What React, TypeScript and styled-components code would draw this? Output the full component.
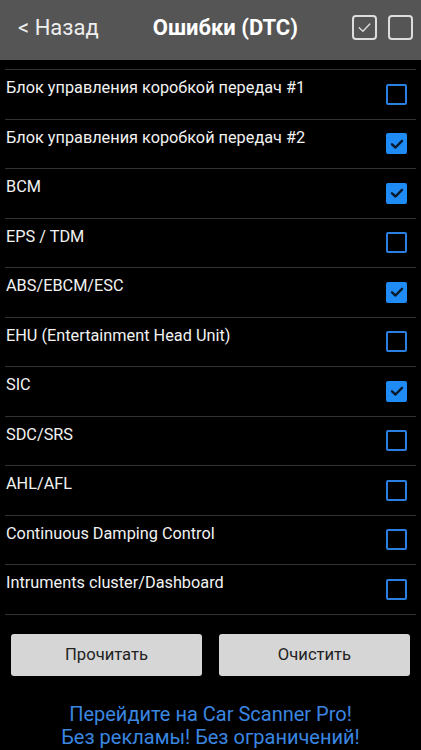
import styled, { createGlobalStyle } from "styled-components";

const GlobalStyle = createGlobalStyle`
  html, body {
    margin: 0;
    padding: 0;
    background: #000;
  }
  body {
    font-family: Roboto, "Noto Sans", sans-serif;
    -webkit-font-smoothing: antialiased;
  }
`;

const Screen = styled.div`
  width: 421px;
  height: 750px;
  background: #000;
  display: flex;
  flex-direction: column;
  overflow: hidden;
`;

const Header = styled.div`
  height: 60px;
  background: #555555;
  display: flex;
  align-items: center;
  padding: 0 8px 5px 18px;
  box-sizing: border-box;
`;

const Back = styled.div`
  color: #eeeeee;
  font-size: 22px;
  white-space: nowrap;
`;

const Title = styled.div`
  flex: 1;
  text-align: center;
  color: #ffffff;
  font-size: 22px;
  font-weight: 700;
`;

const HeaderIcons = styled.div`
  display: flex;
  gap: 11px;
`;

const HeaderBox = styled.div`
  width: 25px;
  height: 25px;
  box-sizing: border-box;
  border: 2px solid #dddddd;
  border-radius: 4px;
  display: flex;
  align-items: center;
  justify-content: center;
`;

const List = styled.div`
  margin: 9px 5px 0;
  border-top: 1px solid #333333;
`;

const Row = styled.div`
  height: 49.5px;
  box-sizing: border-box;
  border-bottom: 1px solid #333333;
  display: flex;
  align-items: center;
  justify-content: space-between;
  padding: 0 9px 0 1px;
`;

const Label = styled.div`
  align-self: flex-start;
  padding-top: 8px;
  color: #f2f2f2;
  font-size: 16.3px;
  line-height: 20px;
`;

const Check = styled.div<{ $on: boolean }>`
  width: 21px;
  height: 21px;
  box-sizing: border-box;
  border-radius: 2px;
  border: 2px solid ${(p) => (p.$on ? "#1f8cf6" : "#2b7fe0")};
  background: ${(p) => (p.$on ? "#1f8cf6" : "transparent")};
  display: flex;
  align-items: center;
  justify-content: center;
`;

const Buttons = styled.div`
  display: flex;
  gap: 17px;
  padding: 19px 11px 0;
`;

const Button = styled.div`
  flex: 1;
  height: 42px;
  background: #d6d6d6;
  border-radius: 3px;
  display: flex;
  align-items: center;
  justify-content: center;
  color: #222222;
  font-size: 16.6px;
`;

const Promo = styled.div`
  margin-top: 27px;
  text-align: center;
  color: #3a86e0;
  font-size: 20px;
  line-height: 23px;
`;

const items: { name: string; on: boolean }[] = [
  { name: "Блок управления коробкой передач #1", on: false },
  { name: "Блок управления коробкой передач #2", on: true },
  { name: "BCM", on: true },
  { name: "EPS / TDM", on: false },
  { name: "ABS/EBCM/ESC", on: true },
  { name: "EHU (Entertainment Head Unit)", on: false },
  { name: "SIC", on: true },
  { name: "SDC/SRS", on: false },
  { name: "AHL/AFL", on: false },
  { name: "Continuous Damping Control", on: false },
  { name: "Intruments cluster/Dashboard", on: false },
];

function Tick({ color, width, size }: { color: string; width: number; size: number }) {
  return (
    <svg width={size} height={size} viewBox="0 0 16 16">
      <path
        d="M3 8.3 L6.5 11.5 L13 4.8"
        fill="none"
        stroke={color}
        strokeWidth={width}
        strokeLinecap="round"
        strokeLinejoin="round"
      />
    </svg>
  );
}

export default function App() {
  return (
    <Screen>
      <GlobalStyle />
      <Header>
        <Back>&lt; Назад</Back>
        <Title>Ошибки (DTC)</Title>
        <HeaderIcons>
          <HeaderBox>
            <Tick color="#dddddd" width={1.3} size={17} />
          </HeaderBox>
          <HeaderBox />
        </HeaderIcons>
      </Header>

      <List>
        {items.map((item) => (
          <Row key={item.name}>
            <Label>{item.name}</Label>
            <Check $on={item.on}>
              {item.on && <Tick color="#0a1a2a" width={2.4} size={16} />}
            </Check>
          </Row>
        ))}
      </List>

      <Buttons>
        <Button>Прочитать</Button>
        <Button>Очистить</Button>
      </Buttons>

      <Promo>
        Перейдите на Car Scanner Pro!
        <br />
        Без рекламы! Без ограничений!
      </Promo>
    </Screen>
  );
}
